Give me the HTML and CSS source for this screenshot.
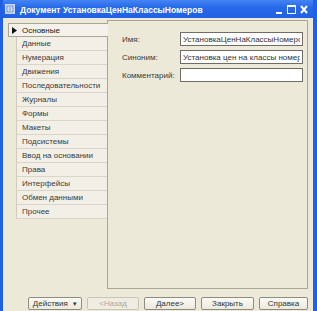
FILE: index.html
```html
<!DOCTYPE html>
<html lang="ru">
<head>
  <meta charset="UTF-8" />
  <meta name="viewport" content="width=device-width, initial-scale=1.0"/>
  <title>Документ УстановкаЦенНаКлассыНомеров</title>
  <link rel="stylesheet" href="styles.css">
</head>
<body>
  <div class="window">
    <!-- TITLE BAR -->
    <div class="titlebar">
      <svg class="app-icon" width="10" height="10" viewBox="0 0 10 10">
        <rect x="0.5" y="0.5" width="9" height="9" fill="#fff" stroke="#c9d6f2"/>
        <rect x="2" y="2" width="6" height="6" fill="none" stroke="#4a74c8"/>
        <line x1="3.5" y1="4" x2="6.5" y2="4" stroke="#4a74c8"/>
        <line x1="3.5" y1="6" x2="6.5" y2="6" stroke="#4a74c8"/>
      </svg>
      <span class="title">Документ УстановкаЦенНаКлассыНомеров</span>
      <svg class="controls" width="38" height="18" viewBox="0 0 38 18">
        <rect x="1" y="12" width="6" height="2" fill="#fff"/>
        <rect x="12.5" y="5.5" width="8" height="8" fill="none" stroke="#fff"/>
        <rect x="12" y="5" width="9" height="2" fill="#fff"/>
        <path d="M26 6 L32 13 M32 6 L26 13" stroke="#fff" stroke-width="2"/>
      </svg>
    </div>

    <!-- TABS + PANEL -->
    <div class="main">
      <ul class="tabs">
        <li class="tab active">
          <svg class="arrow" width="5" height="7" viewBox="0 0 5 7"><path d="M0 0 L5 3.5 L0 7 Z" fill="#111"/></svg>
          Основные
        </li>
        <li class="tab">Данные</li>
        <li class="tab">Нумерация</li>
        <li class="tab">Движения</li>
        <li class="tab">Последовательности</li>
        <li class="tab">Журналы</li>
        <li class="tab">Формы</li>
        <li class="tab">Макеты</li>
        <li class="tab">Подсистемы</li>
        <li class="tab">Ввод на основании</li>
        <li class="tab">Права</li>
        <li class="tab">Интерфейсы</li>
        <li class="tab">Обмен данными</li>
        <li class="tab">Прочее</li>
      </ul>

      <div class="panel">
        <div class="field">
          <label>Имя:</label>
          <input class="input" type="text" value="УстановкаЦенНаКлассыНомеров" />
        </div>
        <div class="field">
          <label>Синоним:</label>
          <input class="input" type="text" value="Установка цен на классы номеров" />
        </div>
        <div class="field">
          <label>Комментарий:</label>
          <input class="input" type="text" value="" />
        </div>
      </div>
    </div>

    <!-- BOTTOM BUTTONS -->
    <div class="buttons">
      <button class="btn btn-actions">Действия <span class="caret">▾</span></button>
      <button class="btn btn-back" disabled>&lt;Назад</button>
      <button class="btn btn-next">Далее&gt;</button>
      <button class="btn btn-close">Закрыть</button>
      <button class="btn btn-help">Справка</button>
    </div>
  </div>
</body>
</html>
```

FILE: styles.css
```css
:root {
  --blue: #2160e4;
  --bg: #ece9d8;
  --tab: #f2f0e6;
  --line: #a9a698;
  --text: #3a3a3a;
}
* {
  box-sizing: border-box;
}
body {
  margin: 0;
  width: 317px;
  height: 311px;
  overflow: hidden;
  background: var(--bg);
  color: var(--text);
  font-family: "Liberation Sans", Arial, sans-serif;
  font-size: 8px;
}
.window {
  height: 311px;
  display: flex;
  flex-direction: column;
  background: var(--bg);
  border-left: 3px solid var(--blue);
  border-right: 4px solid var(--blue);
}
.titlebar {
  height: 18px;
  display: flex;
  align-items: center;
  background: linear-gradient(#4585f4, #2869ea 40%, #2160e4);
  color: #fff;
}
.app-icon {
  margin: 0 5px 0 2px;
}
.title {
  flex: 1;
  font-weight: bold;
  font-size: 8.5px;
  padding-top: 2px;
  white-space: nowrap;
}
.main {
  display: flex;
  padding: 2px 5px 0 5px;
}
.tabs {
  list-style: none;
  margin: 3px 0 0;
  padding: 0;
  width: 99px;
}
.tab {
  height: 14px;
  display: flex;
  align-items: center;
  margin-left: 8px;
  padding-left: 5px;
  background: var(--tab);
  border-left: 1px solid #cfccbe;
  border-bottom: 1px solid #d9d6c9;
  white-space: nowrap;
}
.tab.active {
  position: relative;
  z-index: 1;
  margin-left: 0;
  margin-right: -1px;
  padding-left: 3px;
  background: #f4f2ea;
  border: 1px solid var(--line);
  border-right: none;
  color: #222;
}
.arrow {
  margin-right: 5px;
}
.panel {
  flex: 1;
  height: 269px;
  border: 1px solid var(--line);
  padding: 11px 4px 0 14px;
  display: flex;
  flex-direction: column;
  gap: 4px;
}
.field {
  display: flex;
  align-items: center;
  height: 14px;
}
.field label {
  width: 58px;
}
.input {
  flex: 1;
  min-width: 0;
  height: 14px;
  margin: 0;
  padding: 0 2px;
  border: 1px solid #6f6d66;
  background: #fff;
  color: #333;
  font-family: "Liberation Sans", Arial, sans-serif;
  font-size: 8px;
  outline: none;
}
.buttons {
  display: flex;
  gap: 5px;
  margin-top: 8px;
  padding-left: 25px;
}
.btn {
  height: 13px;
  padding: 0;
  border: 1px solid #8e8b80;
  border-radius: 2px;
  background: linear-gradient(#fbfaf5, #ece9dc);
  color: #333;
  font-family: "Liberation Sans", Arial, sans-serif;
  font-size: 8px;
  line-height: 11px;
}
.btn:disabled {
  color: #aca899;
  border-color: #c9c6b8;
  background: #efede2;
}
.btn-actions {
  width: 54px;
}
.caret {
  margin-left: 3px;
  font-size: 7px;
}
.btn-back,
.btn-next {
  width: 52px;
}
.btn-close {
  width: 53px;
}
.btn-help {
  width: 49px;
}
```
